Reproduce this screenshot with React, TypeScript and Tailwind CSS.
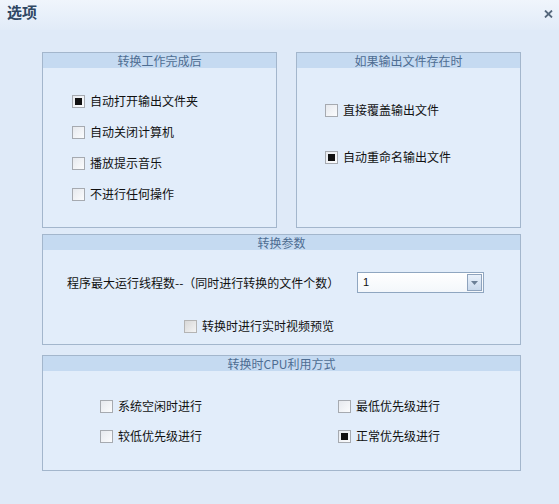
import type { ReactNode } from 'react';

const font = { fontFamily: '"Noto Sans CJK SC", "Liberation Sans", sans-serif' };

function Check({ checked, disabled }: { checked?: boolean; disabled?: boolean }) {
  return (
    <span
      className={
        'flex h-[13px] w-[13px] shrink-0 items-center justify-center border ' +
        (disabled
          ? 'border-[#b4b4b4] bg-gradient-to-br from-[#d8d8d8] to-[#f4f4f4]'
          : 'border-[#a6aab0] bg-gradient-to-br from-[#e6e9ee] to-[#fbfcfd]')
      }
    >
      {checked && <span className="h-[7px] w-[7px] bg-[#111]" />}
    </span>
  );
}

function Option({ label, checked, disabled }: { label: string; checked?: boolean; disabled?: boolean }) {
  return (
    <div className="flex h-5 items-center gap-[5px] text-[12px] text-[#111]">
      <Check checked={checked} disabled={disabled} />
      <span>{label}</span>
    </div>
  );
}

function Group({ title, className, children }: { title: string; className?: string; children: ReactNode }) {
  return (
    <div className={'flex flex-col border border-[#a3b6cc] bg-[#e2edfa] ' + (className ?? '')}>
      <div className="h-[15px] bg-[#c5daf1] text-center text-[12px] leading-[15px] text-[#4e6d92]">{title}</div>
      {children}
    </div>
  );
}

export default function App() {
  return (
    <div className="relative h-[504px] w-[559px] overflow-hidden bg-[#dfeaf8]" style={font}>
      {/* Title bar */}
      <div className="flex h-[30px] items-start justify-between bg-gradient-to-b from-[#f0f5fc] to-[#e1ebf8] px-[7px] pt-[2px]">
        <span className="text-[15px] font-bold leading-[20px] text-[#2f4763]">选项</span>
        <svg width="9" height="8" viewBox="0 0 9 8" className="mr-[-1px] mt-[8px]">
          <path d="M1 0.5 L8 7.5 M8 0.5 L1 7.5" stroke="#56687c" strokeWidth="1.8" />
        </svg>
      </div>

      <div className="flex flex-col pl-[42px] pr-[38px] pt-[22px]">
        <div className="flex h-[176px] gap-[19px]">
          <Group title="转换工作完成后" className="w-[235px]">
            <div className="flex flex-col gap-[11px] pl-[29px] pt-[23px]">
              <Option label="自动打开输出文件夹" checked />
              <Option label="自动关闭计算机" />
              <Option label="播放提示音乐" />
              <Option label="不进行任何操作" />
            </div>
          </Group>
          <Group title="如果输出文件存在时" className="w-[225px]">
            <div className="flex flex-col gap-[27px] pl-[28px] pt-[32px]">
              <Option label="直接覆盖输出文件" />
              <Option label="自动重命名输出文件" checked />
            </div>
          </Group>
        </div>

        <Group title="转换参数" className="mt-[6px] h-[111px]">
          <div className="flex h-[21px] items-center pl-[24px] pt-[22px] box-content">
            <span className="w-[290px] text-[12px] text-[#111]">程序最大运行线程数--（同时进行转换的文件个数）</span>
            <div className="flex h-[21px] w-[127px] items-center border border-[#8fa6c0] bg-gradient-to-b from-white to-[#f3f7fb] pl-[5px] pr-[1px]">
              <span className="flex-1 text-[11px] leading-none text-[#111]" style={{ fontFamily: '"Liberation Sans", sans-serif' }}>1</span>
              <span className="flex h-[17px] w-[15px] items-center justify-center border border-[#8ea3bd] bg-gradient-to-b from-[#e9f1fb] to-[#c9d9ec]">
                <svg width="7" height="4" viewBox="0 0 7 4">
                  <path d="M0 0 H7 L3.5 4 Z" fill="#6b7f96" />
                </svg>
              </span>
            </div>
          </div>
          <div className="pl-[141px] pt-[23px]">
            <Option label="转换时进行实时视频预览" disabled />
          </div>
        </Group>

        <Group title="转换时CPU利用方式" className="mt-[10px] h-[116px]">
          <div className="grid grid-cols-[238px_1fr] gap-y-[10px] pl-[57px] pt-[25px]">
            <Option label="系统空闲时进行" />
            <Option label="最低优先级进行" />
            <Option label="较低优先级进行" />
            <Option label="正常优先级进行" checked />
          </div>
        </Group>
      </div>
    </div>
  );
}
